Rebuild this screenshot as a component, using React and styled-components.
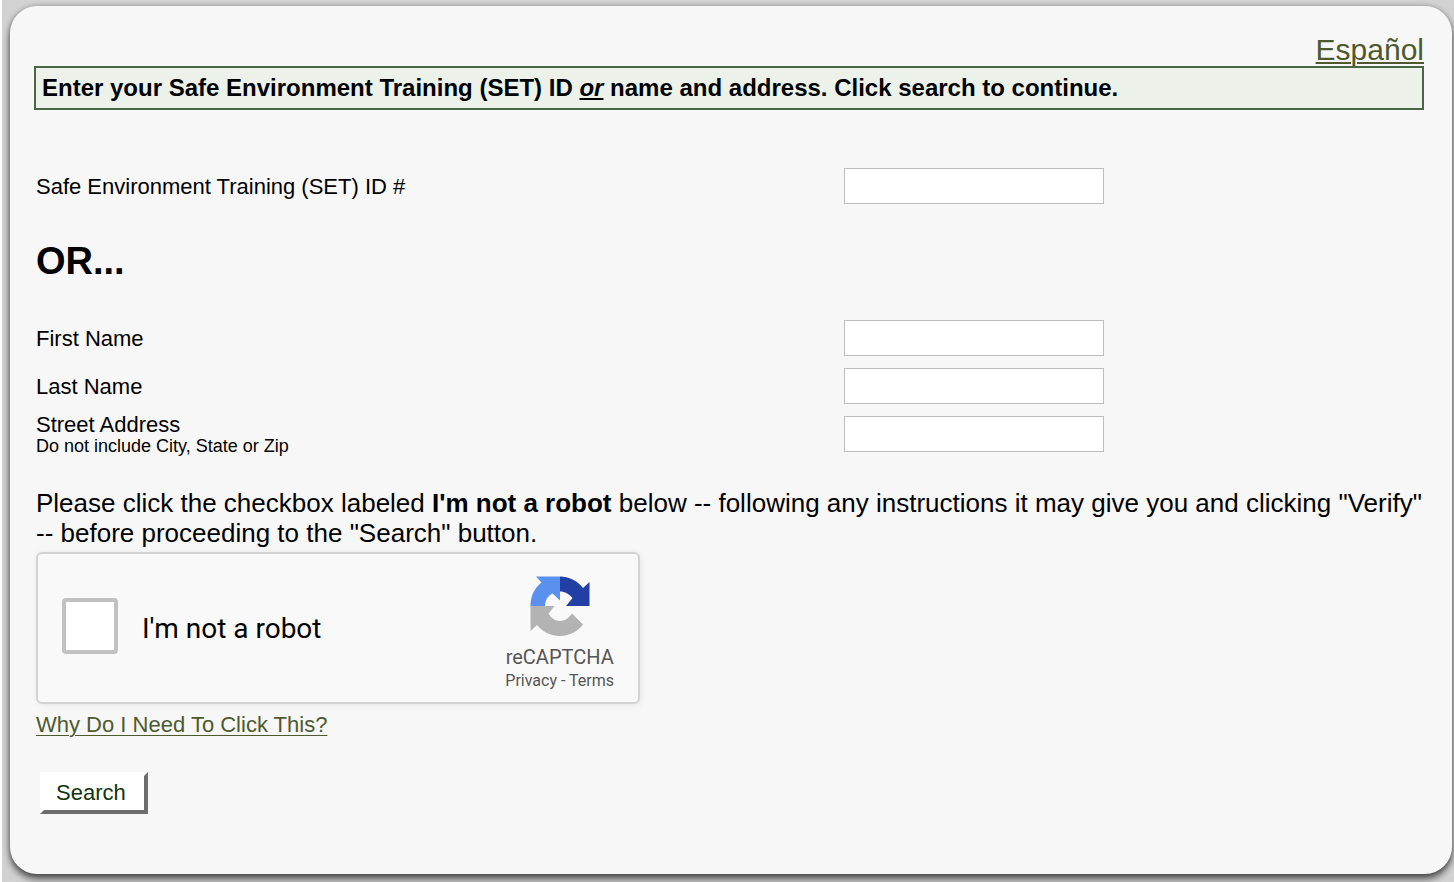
import React from "react";
import styled, { createGlobalStyle } from "styled-components";

const GlobalStyle = createGlobalStyle`
  * { box-sizing: border-box; }
  html, body { margin: 0; height: 100%; }
  body {
    background: #fff;
    color: #000;
    font-family: "Liberation Sans", Arial, sans-serif;
    overflow: hidden;
  }
`;

const Page = styled.div`
  height: 882px;
  margin-left: 2px;
  padding: 6px 2px 8px 8px;
  background: #d2d2d2;
  overflow: hidden;
`;

const Panel = styled.main`
  height: 868px;
  padding: 28px 28px 0 24px;
  background: #f7f7f7;
  border-radius: 27px;
  box-shadow: 0 5px 7px rgba(0, 0, 0, 0.6), 0 0 5px rgba(0, 0, 0, 0.25);
`;

const LanguageBar = styled.div`
  display: flex;
  justify-content: flex-end;
  height: 32px;
`;

const Link = styled.a`
  color: #4d5a2e;
  font-size: ${(p) => p.$size}px;
  line-height: ${(p) => p.$line}px;
  text-decoration: underline;
  text-decoration-thickness: ${(p) => p.$rule}px;
  text-underline-offset: ${(p) => p.$offset}px;
`;

const Notice = styled.h2`
  height: 44px;
  margin: 0;
  padding-left: 6px;
  border: 2px solid #4a6645;
  background: #ecf2ea;
  font-size: 24px;
  line-height: 40px;
  white-space: nowrap;
`;

const Form = styled.form`
  padding: 52px 0 0 2px;
`;

const Row = styled.div`
  display: grid;
  grid-template-columns: 808px 260px;
  align-items: center;
  height: 48px;
`;

const Label = styled.label`
  padding-top: ${(p) => (p.$withHint ? 0 : 2)}px;
  font-size: 22px;
  line-height: 24px;
`;

const Hint = styled.small`
  display: block;
  font-size: 18px;
  line-height: 18px;
`;

const Field = styled.input`
  width: 260px;
  height: 36px;
  padding: 0 6px;
  border: 1px solid #bdbdbd;
  border-radius: 0;
  background: #fff;
  font: 22px "Liberation Sans", Arial, sans-serif;
  outline: none;
`;

const Divider = styled.h1`
  height: 104px;
  margin: 0;
  font-size: 38px;
  line-height: 102px;
`;

const Instructions = styled.p`
  margin: 30px -10px 4px 0;
  font-size: 26px;
  line-height: 30px;
  white-space: nowrap;
`;

const Captcha = styled.section`
  display: flex;
  justify-content: space-between;
  width: 604px;
  height: 152px;
  padding: 0 24px;
  border: 2px solid #d3d3d3;
  border-radius: 6px;
  background: #f9f9f9;
  box-shadow: 1px 1px 6px rgba(0, 0, 0, 0.08);
  font-family: Roboto, sans-serif;
`;

const CheckLabel = styled.label`
  display: flex;
  align-items: center;
  gap: 24px;
  height: 144px;
  font-size: 28px;
  line-height: 34px;
`;

const Checkbox = styled.input`
  appearance: none;
  width: 56px;
  height: 56px;
  margin: 0;
  border: 4px solid #c1c1c1;
  border-radius: 4px;
  background: #fff;
`;

const CheckText = styled.span`
  padding-top: 6px;
`;

const Brand = styled.div`
  display: flex;
  flex-direction: column;
  align-items: center;
  padding-top: 21px;
  color: #555;
  white-space: nowrap;
`;

const BrandName = styled.div`
  margin-top: 8px;
  font-size: 20px;
  line-height: 24px;
`;

const BrandLinks = styled.div`
  margin-top: 1px;
  font-size: 16px;
  line-height: 22px;
`;

const HelpLine = styled.div`
  height: 68px;
  padding-top: 8px;
`;

const SearchButton = styled.button`
  display: block;
  width: 108px;
  height: 42px;
  margin-left: 4px;
  padding: 0 0 0 12px;
  border: 4px solid;
  border-color: #fff #6d6d6d #6d6d6d #fff;
  background: #fff;
  color: #12330b;
  font: 22px/34px "Liberation Sans", Arial, sans-serif;
  text-align: left;
`;

function RecaptchaLogo() {
  return (
    <svg width="62" height="62" viewBox="0 0 62 62" aria-hidden="true">
      <path d="M31 1.500C40 1.500 48 5.500 54 13L60.500 7V31H37L43.500 23C40 19 36 16.500 31 16.500Z" fill="#213fa5" />
      <path d="M31 1.500H7L12.500 7.500C5.500 13 1.500 21 1.500 31H16C16 26 18.500 21 23.500 18.500L31 25.500Z" fill="#5a91ee" />
      <path d="M1.500 31H25.500L19.500 38.500C22 43 26 46 31 46C36 46 40 43 43 38.500L54 49.500C48 57 40 61 31 61C21.500 61 14 57 8 50L1.500 56Z" fill="#b3b3b3" />
    </svg>
  );
}

export default function App() {
  return (
    <>
      <GlobalStyle />
      <Page>
        <Panel>
          <LanguageBar>
            <Link href="#" $size={30} $line={32} $rule={2} $offset={2}>Español</Link>
          </LanguageBar>
          <Notice>
            Enter your Safe Environment Training (SET) ID <em><u>or</u></em> name and address. Click search to continue.
          </Notice>
          <Form onSubmit={(e) => e.preventDefault()}>
            <Row>
              <Label htmlFor="set">Safe Environment Training (SET) ID #</Label>
              <Field id="set" />
            </Row>
            <Divider>OR...</Divider>
            <Row>
              <Label htmlFor="first">First Name</Label>
              <Field id="first" />
            </Row>
            <Row>
              <Label htmlFor="last">Last Name</Label>
              <Field id="last" />
            </Row>
            <Row>
              <Label htmlFor="street" $withHint>
                Street Address
                <Hint>Do not include City, State or Zip</Hint>
              </Label>
              <Field id="street" />
            </Row>
            <Instructions>
              Please click the checkbox labeled <b>I'm not a robot</b> below -- following any instructions it may give you and clicking "Verify"
              <br />
              -- before proceeding to the "Search" button.
            </Instructions>
            <Captcha>
              <CheckLabel>
                <Checkbox type="checkbox" />
                <CheckText>I'm not a robot</CheckText>
              </CheckLabel>
              <Brand>
                <RecaptchaLogo />
                <BrandName>reCAPTCHA</BrandName>
                <BrandLinks>Privacy - Terms</BrandLinks>
              </Brand>
            </Captcha>
            <HelpLine>
              <Link href="#" $size={22} $line={26} $rule={1} $offset={3}>Why Do I Need To Click This?</Link>
            </HelpLine>
            <SearchButton type="submit">Search</SearchButton>
          </Form>
        </Panel>
      </Page>
    </>
  );
}
